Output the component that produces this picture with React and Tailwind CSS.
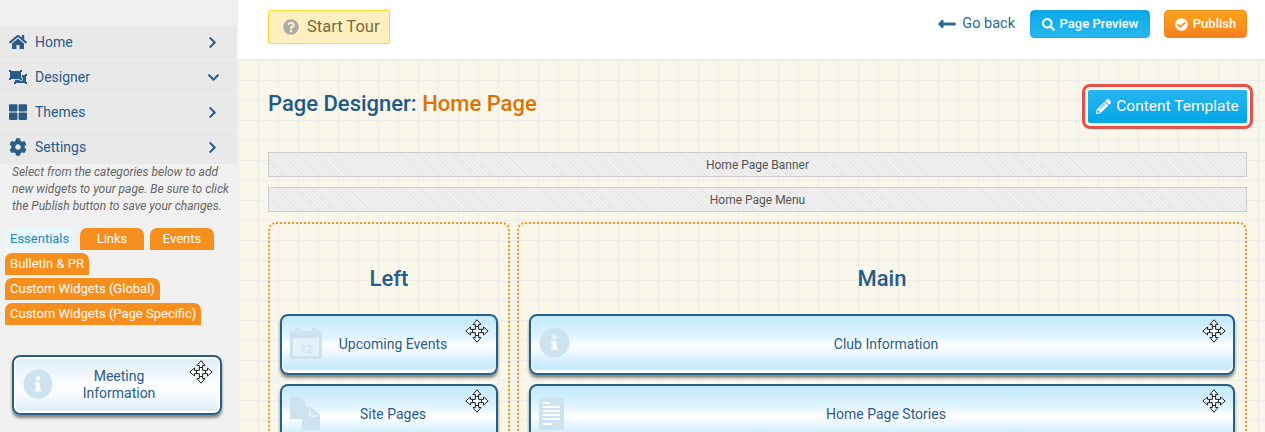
import React from "react";
import { FaHome, FaObjectUngroup, FaThLarge, FaCog, FaChevronRight, FaChevronDown, FaQuestionCircle, FaSearch, FaCheckCircle, FaPencilAlt, FaInfoCircle, FaCalendarAlt, FaLongArrowAltLeft } from "react-icons/fa";

function MoveCursor() {
  return (
    <svg viewBox="0 0 24 24" className="w-[24px] h-[24px]">
      <path d="M12 .8 16 5.5H13.6V10.4H18.5V8L23.2 12 18.5 16V13.6H13.6V18.5H16L12 23.2 8 18.5H10.4V13.6H5.5V16L.8 12 5.5 8V10.4H10.4V5.5H8Z" fill="#fff" stroke="#222" strokeWidth="1" strokeLinejoin="miter" />
      <path d="M10.4 7.5H13.6M10.4 16.5H13.6M7.5 10.4V13.6M16.5 10.4V13.6" stroke="#222" strokeWidth="1" fill="none" />
    </svg>
  );
}

function PagesIcon() {
  return (
    <svg viewBox="0 0 32 34" className="w-[32px] h-[34px]" fill="currentColor">
      <path d="M0 0H11L16 6V22H0Z" />
      <path d="M12 10H21L30 18V33H12Z" />
      <path d="M20 12V19H27" fill="none" stroke="#fff" strokeWidth="1" />
    </svg>
  );
}

function ListIcon() {
  return (
    <svg viewBox="0 0 26 34" className="w-[26px] h-[34px]">
      <rect width="25" height="32" y="1" fill="#cde3f0" />
      <path d="M4 6H11M4 10H21M4 14H21M4 18H21M4 22H21M4 27H13" stroke="#fff" strokeWidth="2" />
    </svg>
  );
}

function CalIcon() {
  return (
    <svg viewBox="0 0 32 32" className="w-[32px] h-[32px]">
      <path d="M2 4H5V1H10V4H22V1H27V4H30Q32 4 32 6V30Q32 32 30 32H2Q0 32 0 30V6Q0 4 2 4Z" fill="#cde3f0" />
      <rect x="3" y="11" width="26" height="18" fill="#e4f1f9" />
      <text x="16" y="26" textAnchor="middle" fontSize="11" fontWeight="700" fill="#cde3f0" fontFamily="Roboto, sans-serif">12</text>
    </svg>
  );
}

function NavRow({ icon, label, open }) {
  return (
    <div className="flex items-center h-[34px] mb-px bg-[#e9e9e9] pl-[9px] pr-[17px] text-[14px] text-[#2b5c87]">
      <span className="w-[18px] flex justify-center text-[18px] mr-[8px]">{icon}</span>
      <span className="flex-1">{label}</span>
      {open ? <FaChevronDown className="text-[13px]" /> : <FaChevronRight className="text-[13px] mr-px" />}
    </div>
  );
}

function Tab({ children, className = "" }) {
  return (
    <div className={`h-[22px] leading-[21px] rounded-t-[7px] bg-[#f78f1e] text-white text-[13px] px-[5px] text-center ${className}`}>{children}</div>
  );
}

function Widget({ icon, label, className = "" }) {
  return (
    <div className={`relative flex items-center justify-center h-[61px] rounded-[8px] border-2 border-[#2a5f85] bg-[linear-gradient(180deg,#c0eaff_0%,#e4f5ff_38%,#ffffff_52%,#d8f1ff_78%,#bfe6fc_100%)] shadow-[0_3px_3px_rgba(0,0,0,0.45),inset_0_-3px_0_#ffffff] text-[14px] text-[#2b5c87] ${className}`}>
      <span className="absolute left-[8px] top-[11px] text-[#cde3f0]">{icon}</span>
      <span className="pl-[8px]">{label}</span>
      <span className="absolute right-[7px] top-[3px]"><MoveCursor /></span>
    </div>
  );
}

function Bar({ children }) {
  return (
    <div className="h-[25px] border border-[#cccccc] bg-[#ececec] bg-[repeating-linear-gradient(45deg,#e6e6e6_0px,#e6e6e6_1px,#f0f0f0_1px,#f0f0f0_3px)] flex items-center justify-center text-[12px] text-[#555555]">{children}</div>
  );
}

export default function App() {
  return (
    <div className="flex w-[1265px] h-[432px] overflow-hidden font-['Roboto',sans-serif] bg-white">
      <aside className="w-[238px] shrink-0 bg-[#f1f1f1] pt-[25px]">
        <div className="w-[237px]">
          <NavRow icon={<FaHome />} label="Home" />
          <NavRow icon={<FaObjectUngroup />} label="Designer" open />
          <NavRow icon={<FaThLarge />} label="Themes" />
          <NavRow icon={<FaCog />} label="Settings" />
        </div>
        <p className="pl-[12px] pr-[2px] italic text-[12px] leading-[17px] text-[#666666] mt-[-1px] pt-[0px]">
          Select from the categories below to add new widgets to your page. Be sure to click the Publish button to save your changes.
        </p>
        <div className="flex flex-wrap gap-x-[6px] gap-y-[3px] pl-[5px] mt-[13px] w-[230px]">
          <Tab className="w-[69px] !bg-[#e8f8fd] !text-[#2b84b5]">Essentials</Tab>
          <Tab className="w-[64px]">Links</Tab>
          <Tab className="w-[64px]">Events</Tab>
          <Tab className="w-[84px]">Bulletin &amp; PR</Tab>
          <div className="w-full flex"><Tab>Custom Widgets (Global)</Tab></div>
          <div className="w-full flex"><Tab>Custom Widgets (Page Specific)</Tab></div>
        </div>
        <div className="pl-[12px] pr-[16px] mt-[30px]">
          <div className="relative flex items-center justify-center h-[60px] rounded-[8px] border-2 border-[#2a5f85] bg-[linear-gradient(180deg,#dcedf7_0%,#ffffff_55%,#dcedf7_100%)] shadow-[0_3px_3px_rgba(0,0,0,0.45),inset_0_0_0_2px_#ffffff] text-[14px] leading-[17px] text-[#2b5c87] text-center">
            <FaInfoCircle className="absolute left-[9px] top-[12px] text-[30px] text-[#cde3f0]" />
            <span className="w-[90px] ml-[4px]">Meeting Information</span>
            <span className="absolute right-[7px] top-[3px]"><MoveCursor /></span>
          </div>
        </div>
      </aside>

      <main className="flex-1 min-w-0 flex flex-col">
        <header className="h-[60px] shrink-0 bg-white flex items-start pt-[10px] pl-[30px] pr-[18px] border-b border-[#eeeeee]">
          <button className="flex items-center h-[34px] w-[122px] pl-[14px] rounded-[2px] border border-[#ffd633] bg-[#fff0bf] text-[#7b6a3c] text-[16.5px]">
            <FaQuestionCircle className="text-[16px] text-[#aaaaaa] mr-[8px]" />
            Start Tour
          </button>
          <div className="ml-auto flex items-center">
            <span className="flex items-center text-[#2b6a94] text-[14.5px] mr-[15px] h-[28px]">
              <FaLongArrowAltLeft className="text-[20px] mr-[5px]" />
              Go back
            </span>
            <button className="flex items-center justify-center h-[28px] w-[120px] rounded-[4px] border border-[#18a9e6] bg-[linear-gradient(180deg,#0aa8e8,#2ab7f0)] text-white text-[13px] font-medium">
              <FaSearch className="text-[13px] mr-[5px]" />
              Page Preview
            </button>
            <button className="flex items-center justify-center h-[28px] w-[83px] ml-[14px] rounded-[4px] border border-[#ec8a1c] bg-[linear-gradient(180deg,#fda51d,#f8801b)] text-white text-[13px] font-medium">
              <FaCheckCircle className="text-[13px] mr-[5px]" />
              Publish
            </button>
          </div>
        </header>

        <section className="flex-1 min-h-0 pl-[30px] pr-[18px] bg-[#f8f7ea] bg-[linear-gradient(#efedec_1px,transparent_1px),linear-gradient(90deg,#efedec_1px,transparent_1px)] bg-[size:20px_20px] bg-[position:20px_0px]">
          <div className="flex items-start justify-between h-[92px] pt-[30px]">
            <h1 className="text-[22px] leading-[28px] font-medium text-[#1f5b85]">
              Page Designer: <span className="text-[#dc7305]">Home Page</span>
            </h1>
            <div className="relative mt-[0px]">
              <button className="flex items-center justify-center h-[33px] w-[159px] rounded-[2px] bg-[linear-gradient(180deg,#27b5f0,#03a6e6)] text-white text-[15.5px] outline outline-[3px] outline-offset-[3px] outline-[#e8504a]">
                <FaPencilAlt className="text-[15px] mr-[5px]" />
                Content Template
              </button>
            </div>
          </div>
          <div className="flex flex-col gap-[10px]">
            <Bar>Home Page Banner</Bar>
            <Bar>Home Page Menu</Bar>
          </div>
          <div className="flex gap-[7px] mt-[10px]">
            <div className="w-[242px] shrink-0 h-[260px] border-2 border-dotted border-[#f7931e] rounded-[8px] px-[10px]">
              <h2 className="text-center text-[22px] font-medium text-[#2b5c87] leading-[28px] mt-[41px] mb-[21px]">Left</h2>
              <div className="flex flex-col gap-[9px]">
                <Widget icon={<CalIcon />} label="Upcoming Events" />
                <Widget icon={<PagesIcon />} label="Site Pages" />
              </div>
            </div>
            <div className="flex-1 h-[260px] border-2 border-dotted border-[#f7931e] rounded-[8px] px-[10px]">
              <h2 className="text-center text-[22px] font-medium text-[#2b5c87] leading-[28px] mt-[41px] mb-[21px]">Main</h2>
              <div className="flex flex-col gap-[9px]">
                <Widget icon={<FaInfoCircle className="text-[31px]" />} label="Club Information" />
                <Widget icon={<ListIcon />} label="Home Page Stories" />
              </div>
            </div>
          </div>
        </section>
      </main>
    </div>
  );
}
